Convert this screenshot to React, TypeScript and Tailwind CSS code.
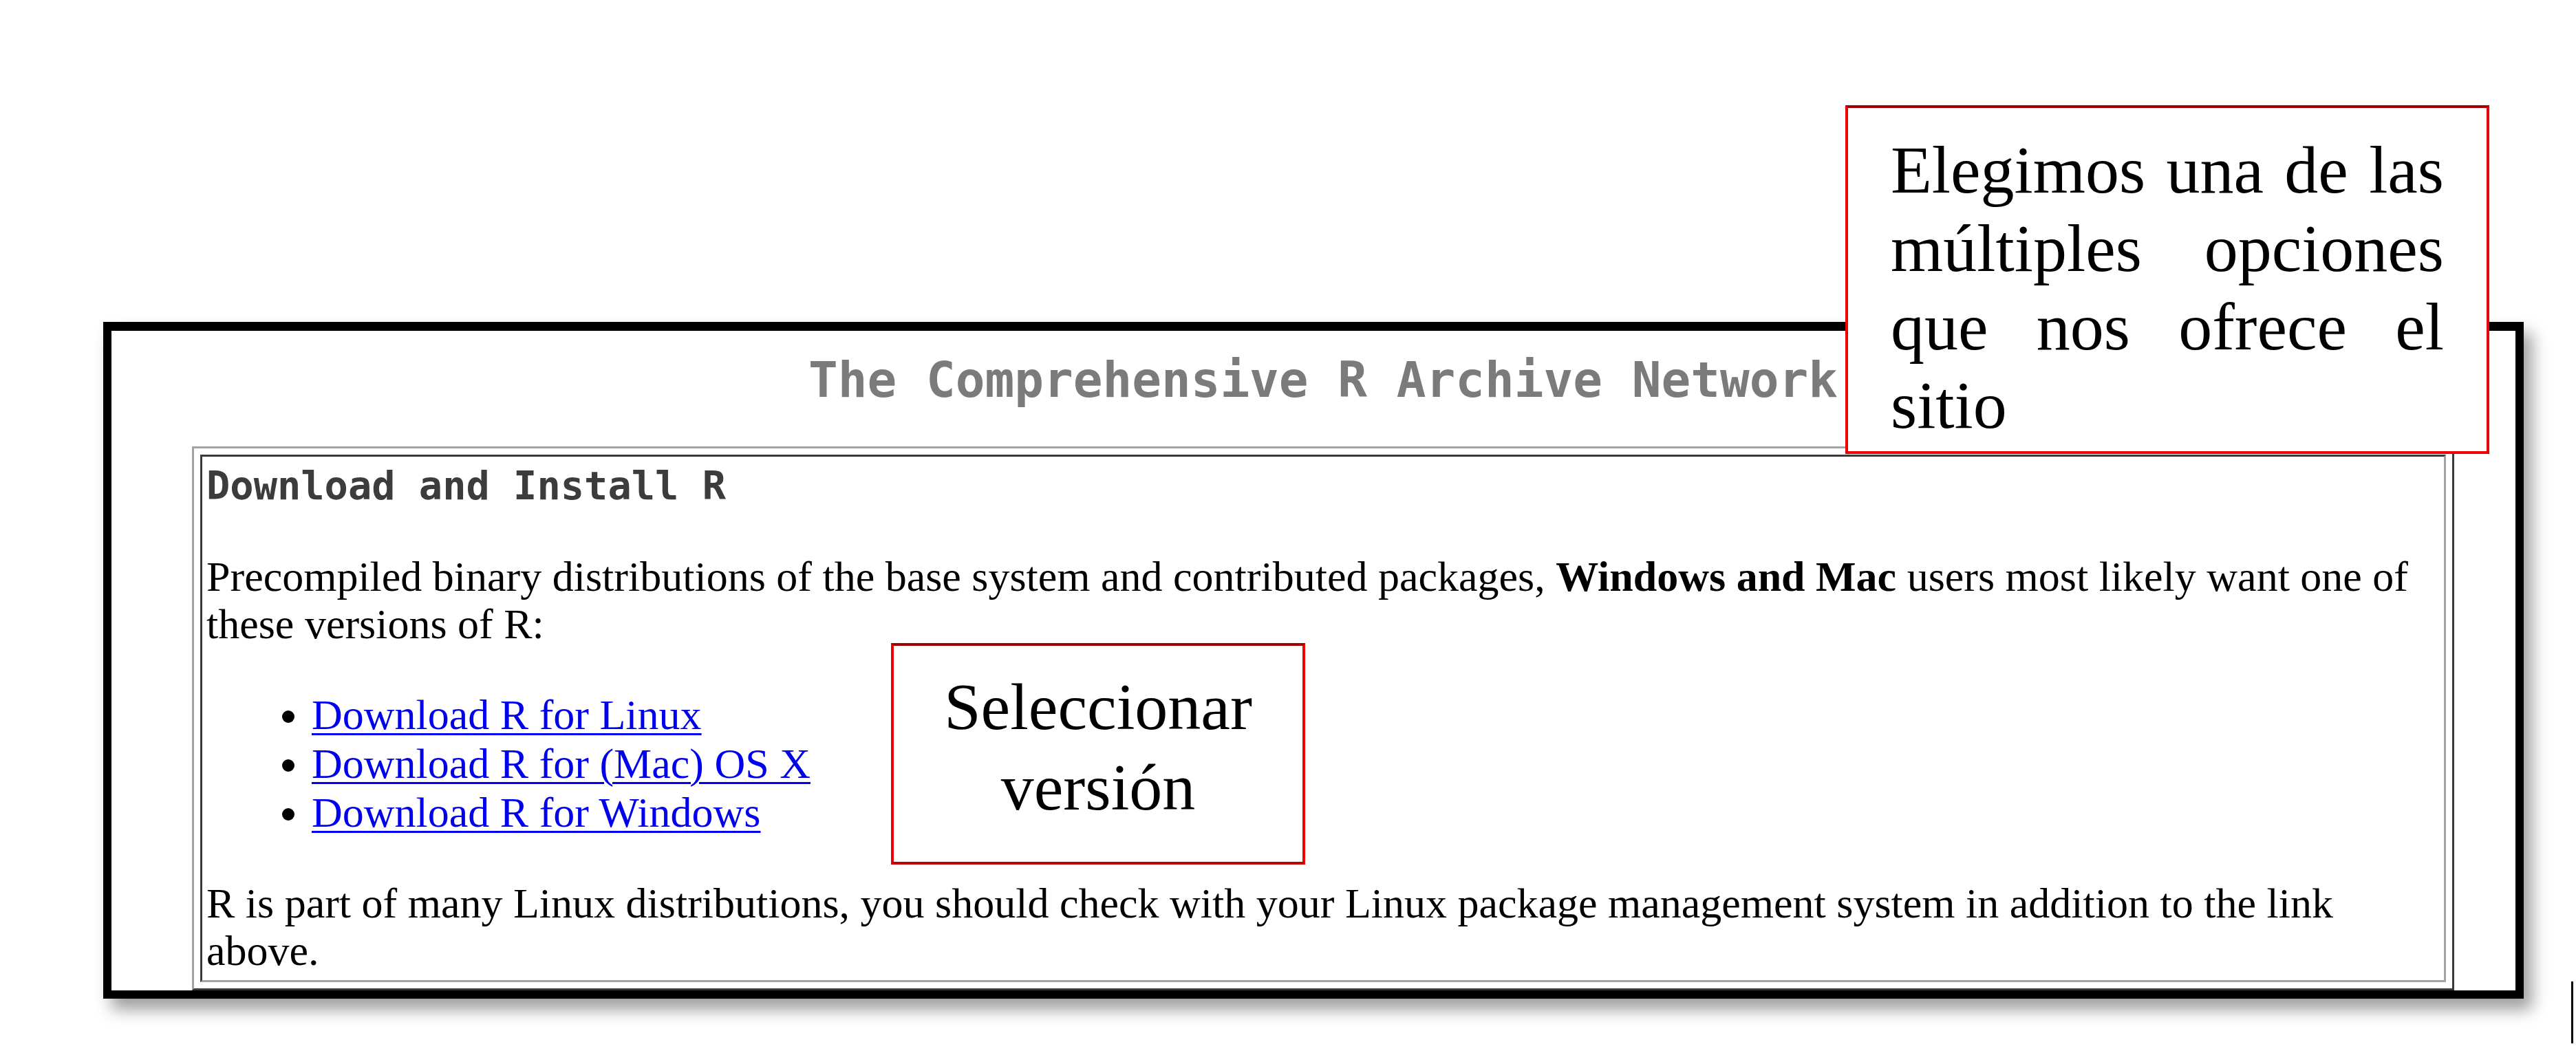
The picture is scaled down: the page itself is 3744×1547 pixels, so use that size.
import React from "react";

const serif = "font-['Liberation_Serif','Times_New_Roman',serif]";
const mono = "font-['DejaVu_Sans_Mono','Liberation_Mono',monospace]";

const links = ["Download R for Linux", "Download R for (Mac) OS X", "Download R for Windows"];

export default function App() {
  return (
    <div className={`relative w-[3744px] h-[1547px] bg-white overflow-hidden ${serif}`}>
      {/* captura de CRAN */}
      <div className="ml-[150px] mt-[468px] w-[3518px] h-[984px] bg-white border-[12px] border-t-[13px] border-black shadow-[12px_16px_22px_rgba(0,0,0,0.38)]">
        <h1 className={`${mono} pt-[32px] pl-[28px] text-center text-[71px] leading-[80px] font-bold text-[#7b7b7b]`}>
          The Comprehensive R Archive Network
        </h1>

        <div className="mt-[56px] ml-[117px] mr-[89px]">
          <div className="border-[3px] border-t-[#a3a3a3] border-l-[#a3a3a3] border-r-[#3a3a3a] border-b-[#3a3a3a] p-[9px]">
            <div className="border-[3px] border-t-[#3a3a3a] border-l-[#3a3a3a] border-r-[#a3a3a3] border-b-[#a3a3a3] pt-[10px] pb-[8px] px-[6px]">
              <p className={`${mono} text-[57px] leading-[65px] font-bold text-[#3c3c3c]`}>
                Download and Install R
              </p>

              <p className="mt-[65px] text-[62px] leading-[69px] text-black">
                Precompiled binary distributions of the base system and contributed packages,{" "}
                <b>Windows and Mac</b> users most likely want one of these versions of R:
              </p>

              <ul className="mt-[62px] pl-[153px] list-disc text-[62px] leading-[71px] text-black">
                {links.map((l) => (
                  <li key={l}>
                    <a href="#" className="text-[#0000ee] underline decoration-[3px] underline-offset-[6px]">
                      {l}
                    </a>
                  </li>
                ))}
              </ul>

              <p className="mt-[62px] text-[62px] leading-[69px] text-black">
                R is part of many Linux distributions, you should check with your Linux package
                management system in addition to the link above.
              </p>
            </div>
          </div>
        </div>
      </div>

      {/* anotaciones */}
      <div className="absolute left-[2682px] top-[153px] w-[936px] h-[507px] bg-white border-4 border-[#ee0000] border-t-[#a00000] px-[62px] pt-[33px]">
        <p className="text-[98px] leading-[114px] text-justify text-black">
          Elegimos una de las múltiples opciones que nos ofrece el sitio
        </p>
      </div>

      <div className="absolute left-[1295px] top-[935px] w-[602px] h-[322px] bg-white border-4 border-[#ee0000] border-t-[#a00000] border-b-[#c00000] pt-[30px]">
        <p className="text-[96px] leading-[117px] text-center text-black">
          Seleccionar
          <br />
          versión
        </p>
      </div>

      <div className="absolute left-[3737px] top-[1427px] w-[3px] h-[90px] bg-black" />
    </div>
  );
}
